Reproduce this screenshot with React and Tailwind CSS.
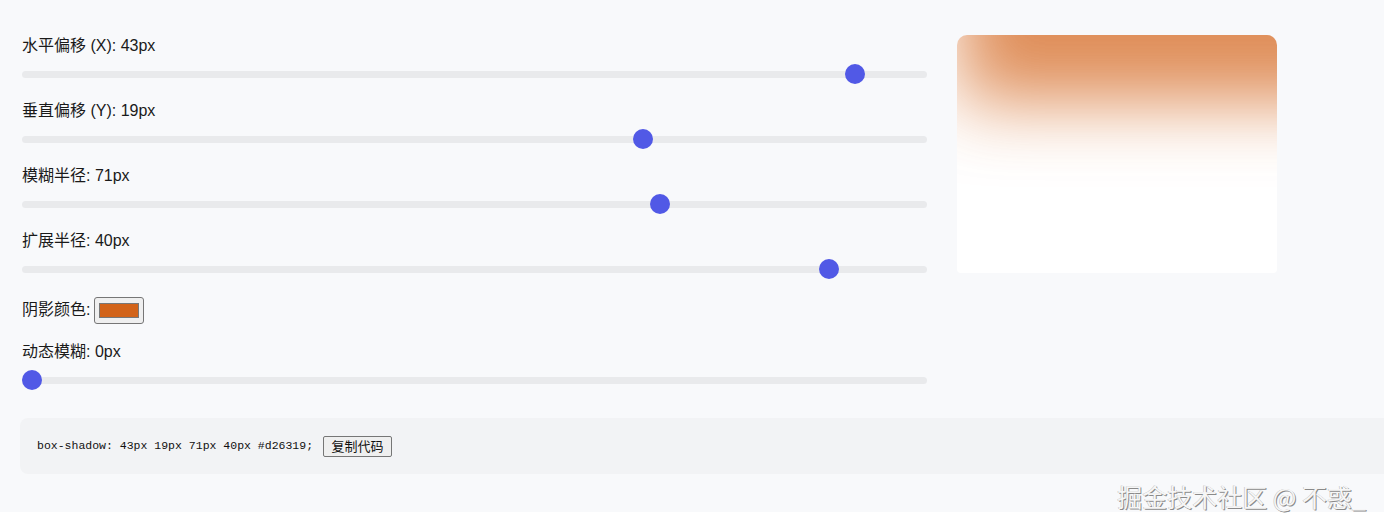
import React from "react";

const font = { fontFamily: '"Liberation Sans", "Noto Sans CJK SC", sans-serif' };

function Slider({ value, min, max }) {
  const pct = (value - min) / (max - min);
  return (
    <div className="relative mt-[7px] h-5 w-full">
      <div className="absolute left-0 right-0 top-[7px] h-[7px] rounded-full bg-[#e9eaec]" />
      <div
        className="absolute top-0 h-5 w-5 rounded-full bg-[#5159e6]"
        style={{ left: `calc(${pct} * (100% - 20px))` }}
      />
    </div>
  );
}

function Row({ label, value, min, max, last }) {
  return (
    <div className={last ? "" : "mb-4"}>
      <div className="h-[22px] text-[16px] leading-[22px] text-[#1a1a1a]">{label}</div>
      <Slider value={value} min={min} max={max} />
    </div>
  );
}

export default function App() {
  return (
    <div className="relative min-h-[529px] w-[1384px] overflow-hidden bg-white" style={font}>
      <div className="h-[512px] bg-[#f8f9fb]">
        <div className="flex gap-[30px] pl-[22px] pt-[35px]">
          <div className="w-[905px]">
            <Row label="水平偏移 (X): 43px" value={43} min={-50} max={50} />
            <Row label="垂直偏移 (Y): 19px" value={19} min={-50} max={50} />
            <Row label="模糊半径: 71px" value={71} min={0} max={100} />
            <Row label="扩展半径: 40px" value={40} min={-50} max={50} />
            <div className="mb-4 flex h-[30px] items-center gap-[4px] text-[16px] text-[#1a1a1a]">
              <span>阴影颜色:</span>
              <div className="flex h-[27px] w-[50px] items-center justify-center rounded-[3px] border border-[#767676] bg-[#efefef]">
                <div className="h-[15px] w-[40px] border border-[#777] bg-[#d26319]" />
              </div>
            </div>
            <Row label="动态模糊: 0px" value={0} min={0} max={100} last />
          </div>
          <div className="relative h-[238px] w-[320px] overflow-hidden rounded-t-[10px] rounded-b-[4px] bg-white">
            <div className="absolute bottom-full left-0 h-[120px] w-full bg-white shadow-[43px_27px_71px_40px_rgba(210,99,25,0.72)]" />
          </div>
        </div>
        <div className="ml-5 mt-[28px] flex h-[56px] items-center gap-[10px] rounded-l-lg bg-[#f2f3f5] pl-[17px]">
          <code
            className="text-[11.5px] text-[#111]"
            style={{ fontFamily: '"Liberation Mono", monospace' }}
          >
            box-shadow: 43px 19px 71px 40px #d26319;
          </code>
          <button className="h-[21px] w-[69px] rounded-[2px] border border-[#767676] bg-[#efefef] text-[13px] leading-[19px] text-[#111]">
            复制代码
          </button>
        </div>
      </div>
      <div
        className="absolute right-[18px] top-[481px] text-[25px] leading-[30px] text-[#f6f6f6]"
        style={{
          fontFamily: '"Noto Sans CJK SC", sans-serif',
          textShadow: "1px 1px 0 #8a8a8a, -0.5px -0.5px 0 #bbb",
        }}
      >
        掘金技术社区 @ 不惑_
      </div>
    </div>
  );
}
